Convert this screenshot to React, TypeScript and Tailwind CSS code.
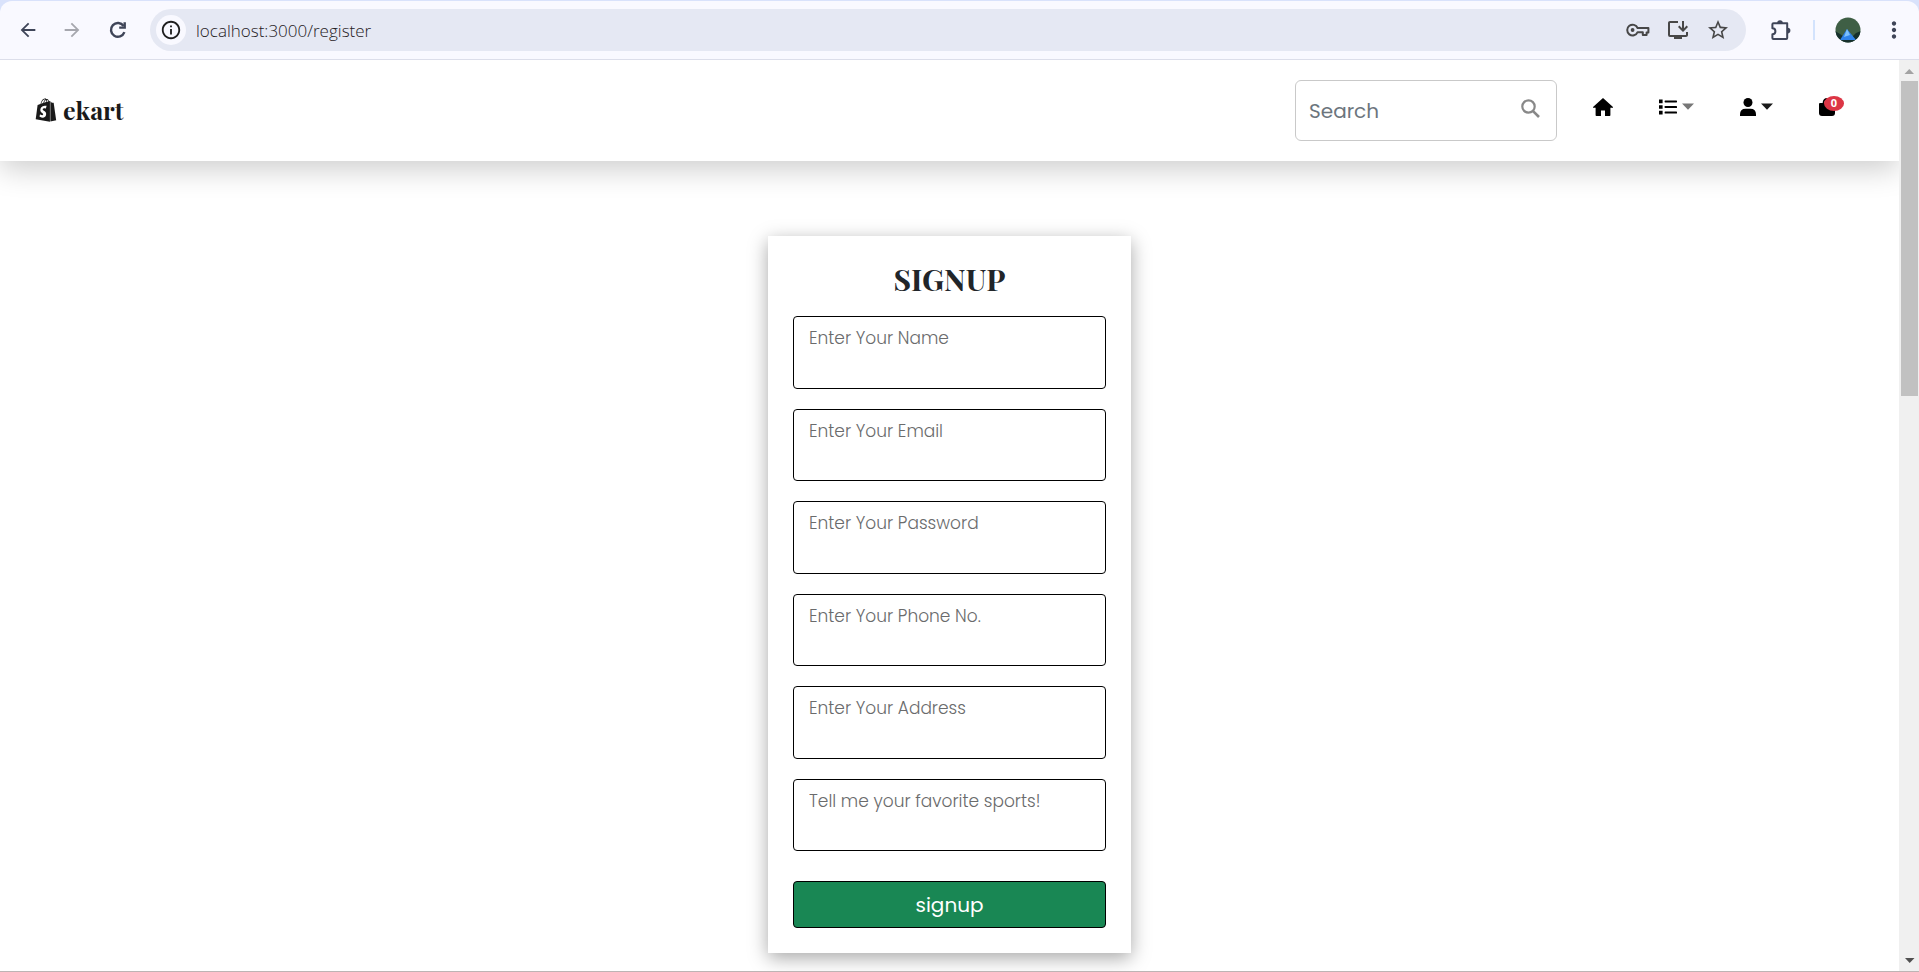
import { FaShopify } from "react-icons/fa";
import { MdOutlineInstallDesktop, MdStarBorder, MdArrowBack, MdArrowForward, MdMoreVert, MdOutlineInfo } from "react-icons/md";

const fields = [
  { id: "name", type: "text", placeholder: "Enter Your Name" },
  { id: "email", type: "email", placeholder: "Enter Your Email" },
  { id: "password", type: "password", placeholder: "Enter Your Password" },
  { id: "phone", type: "tel", placeholder: "Enter Your Phone No." },
  { id: "address", type: "text", placeholder: "Enter Your Address" },
  { id: "sports", type: "text", placeholder: "Tell me your favorite sports!" },
];

function KeyIcon() {
  return (
    <svg width="24" height="14" viewBox="0 0 24 14" fill="none" stroke="#474747" strokeWidth="2">
      <path d="M11.6 5H22.4V9.6H20.6V12H16.8V9.2H11.6A5.4 5.4 0 1 1 11.6 5Z" strokeLinejoin="round" />
      <circle cx="6.6" cy="7" r="1.9" fill="#474747" stroke="none" />
    </svg>
  );
}

function ReloadIcon() {
  return (
    <svg width="18" height="18" viewBox="0 0 18 18" fill="none" stroke="currentColor" strokeWidth="2.4">
      <path d="M15.4 11.2A6.9 6.9 0 1 1 14.6 5" />
      <path d="M15.7 1.2V6.6H10.2" />
    </svg>
  );
}

function ExtensionIcon() {
  return (
    <svg width="22" height="22" viewBox="0 0 22 22" fill="none">
      <path
        d="M3.6 4.2H17.2V18.9Q17.2 19.9 16.2 19.9H3.4Q2.4 19.9 2.4 18.9V15.2A3 3 0 0 0 2.4 9.2V5.2Q2.4 4.2 3.6 4.2Z"
        stroke="currentColor"
        strokeWidth="2"
        strokeLinejoin="round"
      />
      <path d="M7.2 4A2.8 2.8 0 0 1 12.8 4ZM17.6 8.8A2.8 2.8 0 0 1 17.6 14.4Z" fill="currentColor" />
    </svg>
  );
}

function BrowserBar() {
  return (
    <div className="bg-[#d9e2fb] pt-px">
      <div className="flex h-[59px] items-center rounded-t-xl border-b border-[#dcdeea] bg-[#f9f9ff] pl-4 pr-3 text-[#3f4558]">
        <button aria-label="Back" className="flex w-6 justify-center"><MdArrowBack size={22} /></button>
        <button aria-label="Forward" className="ml-5 flex w-6 justify-center text-[#a6a7ae]"><MdArrowForward size={22} /></button>
        <button aria-label="Reload" className="ml-[22px] flex w-6 justify-center"><ReloadIcon /></button>
        <div className="ml-5 flex h-[42px] flex-1 items-center rounded-full bg-[#e5e8f3] pl-1.5 pr-4 text-[#474747]">
          <button aria-label="Site information" className="flex size-[30px] items-center justify-center rounded-full bg-[#f9f9ff] text-[#1f1f1f]">
            <MdOutlineInfo size={22} />
          </button>
          <input
            aria-label="Address"
            defaultValue="localhost:3000/register"
            className="ml-2.5 flex-1 bg-transparent pt-px font-['Open_Sans',sans-serif] text-[17px] font-light text-[#1f2023] outline-none"
          />
          <div className="flex items-center gap-4">
            <KeyIcon />
            <MdOutlineInstallDesktop size={24} />
            <MdStarBorder size={24} />
          </div>
        </div>
        <button aria-label="Extensions" className="ml-6 flex"><ExtensionIcon /></button>
        <span className="ml-[21px] h-5 w-0.5 bg-[#d3e3fd]" />
        <button aria-label="Profile" className="ml-5">
          <svg width="26" height="26" viewBox="0 0 26 26">
            <clipPath id="avatar"><circle cx="13" cy="13" r="12.5" /></clipPath>
            <g clipPath="url(#avatar)">
              <rect width="26" height="26" fill="#3f5f45" />
              <path d="M0 14 5 17 9 20H17L21 16 26 14V26H0Z" fill="#16302c" />
              <path d="M5 23 12 12 21 23Z" fill="#2f83ea" />
              <path d="M9 20 12 12 15 18Z" fill="#7cc0fb" />
            </g>
          </svg>
        </button>
        <button aria-label="Menu" className="ml-5 flex"><MdMoreVert size={26} /></button>
      </div>
    </div>
  );
}

function Caret({ className }: { className: string }) {
  return (
    <svg width="12" height="8" viewBox="0 0 12 8" className={className}>
      <path d="M0 .6H12L6 6.8Z" fill="currentColor" />
    </svg>
  );
}

function HomeIcon() {
  return (
    <svg width="20" height="18" viewBox="0 0 20 18" fill="currentColor">
      <path d="M10 0 20 9V9.8H17.4V17.2Q17.4 18 16.6 18H12V12.4H8V18H3.4Q2.6 18 2.6 17.2V9.8H0V9Z" />
    </svg>
  );
}

function ListIcon() {
  return (
    <svg width="18" height="16" viewBox="0 0 18 16" fill="currentColor">
      <path d="M0 .6H3.6V4.2H0ZM0 6.2H3.6V9.8H0ZM0 11.8H3.6V15.4H0Z" />
      <rect x="5.6" y="1.4" width="12.4" height="2" rx=".6" />
      <rect x="5.6" y="7" width="12.4" height="2" rx=".6" />
      <rect x="5.6" y="12.6" width="12.4" height="2" rx=".6" />
    </svg>
  );
}

function PersonIcon() {
  return (
    <svg width="16" height="18" viewBox="0 0 16 18" fill="currentColor">
      <circle cx="8" cy="4.5" r="4.5" />
      <path d="M0 18V16.4Q0 10.8 5.6 10.8H10.4Q16 10.8 16 16.4V18Z" />
    </svg>
  );
}

function BagIcon() {
  return (
    <svg width="16" height="18" viewBox="0 0 16 18" fill="currentColor">
      <path d="M4.6 6V4.4A3.4 3.4 0 0 1 11.4 4.4V6" fill="none" stroke="currentColor" strokeWidth="1.8" />
      <path d="M1 5H15Q16 5 16 6V15Q16 18 13 18H3Q0 18 0 15V6Q0 5 1 5Z" />
    </svg>
  );
}

function Navbar() {
  return (
    <header className="flex h-[101px] items-center bg-white pl-[34px] pr-16 shadow-[0_8px_28px_rgba(0,0,0,0.2)]">
      <a href="#" className="mb-0.5 flex items-center gap-[5px] font-['Playfair_Display','Liberation_Serif',serif] text-[25px] font-bold text-[#1a1a1a]">
        <FaShopify size={24} />
        ekart
      </a>
      <nav className="ml-auto flex items-center">
        <div className="flex h-[61px] w-[262px] items-center rounded-md border border-[#c9c9c9] pl-[13px] pr-4">
          <input
            type="search"
            aria-label="Search"
            placeholder="Search"
            className="w-full min-w-0 bg-transparent text-xl outline-none placeholder:text-[#6c757d]"
          />
          <button aria-label="Submit search" className="mb-1 shrink-0">
            <svg width="19" height="19" viewBox="0 0 19 19" fill="none" stroke="#888" strokeWidth="2.2">
              <circle cx="7.5" cy="7.5" r="6.2" />
              <path d="m11.8 11.8 6.2 6.2" strokeWidth="2.6" />
            </svg>
          </button>
        </div>
        <div className="mb-2 flex items-center text-black">
          <a href="#" aria-label="Home" className="ml-9"><HomeIcon /></a>
          <button aria-label="Categories" className="ml-[46px] flex items-center gap-[5px]">
            <ListIcon />
            <Caret className="text-[#777]" />
          </button>
          <button aria-label="Account" className="ml-[46px] flex items-center gap-[5px]">
            <PersonIcon />
            <Caret className="text-[#1a1a1a]" />
          </button>
          <a href="#" aria-label="Cart" className="relative ml-[46px]">
            <BagIcon />
            <span className="absolute -top-0.5 left-[5px] flex h-[15px] w-5 items-center justify-center rounded-[50%] bg-[#dc3545] font-['Open_Sans',sans-serif] text-[11px] font-bold text-white">0</span>
          </a>
        </div>
      </nav>
    </header>
  );
}

function SignupForm() {
  return (
    <form className="mx-auto mt-[75px] w-[363px] bg-white px-[25px] pb-[25px] pt-[25px] shadow-[0_5px_18px_rgba(0,0,0,0.35)]">
      <h1 className="text-center font-['Playfair_Display','Liberation_Serif',serif] text-[30px] font-bold leading-9 text-[#212529]">SIGNUP</h1>
      <div className="mt-[19px] grid min-h-[535px] grid-rows-6 gap-5">
        {fields.map((f) => (
          <label key={f.id} htmlFor={f.id} className="block rounded border border-black px-[15px] pt-[7px]">
            <input
              id={f.id}
              type={f.type}
              aria-label={f.placeholder}
              placeholder={f.placeholder}
              className="w-full bg-transparent text-[17px] font-light leading-7 outline-none placeholder:text-[#6a6b6c]"
            />
          </label>
        ))}
      </div>
      <button type="submit" className="mt-[30px] h-[47px] w-full rounded border border-black bg-[#198754] text-xl text-white">signup</button>
    </form>
  );
}

function ScrollBar() {
  return (
    <div aria-hidden="true" className="flex w-5 shrink-0 flex-col items-center bg-[#f0f0f0]">
      <svg width="20" height="21" viewBox="0 0 20 21"><path d="M5.5 14H15L10.3 9Z" fill="#a3a3a3" /></svg>
      <div className="h-[315px] w-[17px] bg-[#c1c1c1]" />
      <svg width="20" height="20" viewBox="0 0 20 20" className="mt-auto"><path d="M6 7H15.5L10.7 12Z" fill="#505050" /></svg>
    </div>
  );
}

export default function App() {
  return (
    <div className="flex h-screen flex-col overflow-hidden bg-white font-['Poppins','Inter',sans-serif]">
      <BrowserBar />
      <div className="flex min-h-0 flex-1 border-b border-[#bdb4b4]">
        <main className="min-w-0 flex-1 overflow-hidden">
          <Navbar />
          <SignupForm />
        </main>
        <ScrollBar />
      </div>
    </div>
  );
}
